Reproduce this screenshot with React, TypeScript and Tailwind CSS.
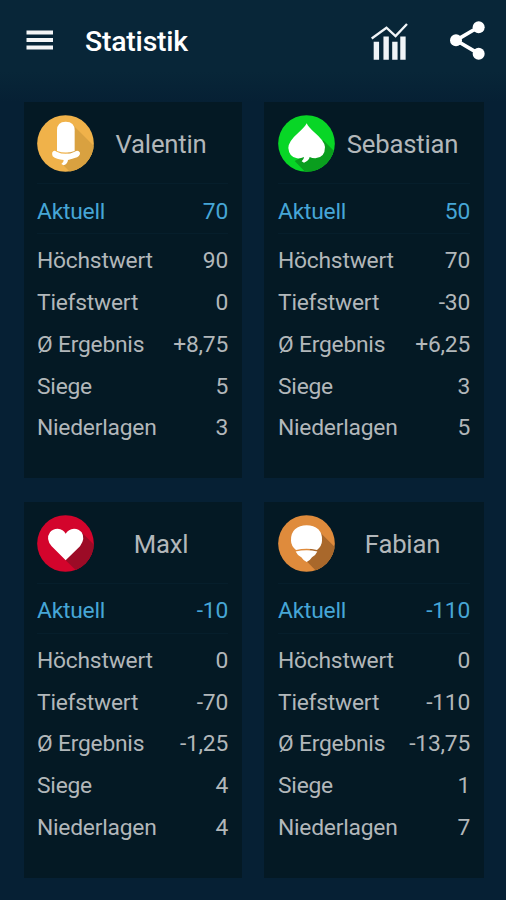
import type { ReactNode } from 'react';

type Suit = 'acorn' | 'spade' | 'heart' | 'bell';

interface Player {
  name: string;
  suit: Suit;
  current: string;
  stats: [string, string][];
}

const players: Player[] = [
  {
    name: 'Valentin',
    suit: 'acorn',
    current: '70',
    stats: [['Höchstwert', '90'], ['Tiefstwert', '0'], ['Ø Ergebnis', '+8,75'], ['Siege', '5'], ['Niederlagen', '3']],
  },
  {
    name: 'Sebastian',
    suit: 'spade',
    current: '50',
    stats: [['Höchstwert', '70'], ['Tiefstwert', '-30'], ['Ø Ergebnis', '+6,25'], ['Siege', '3'], ['Niederlagen', '5']],
  },
  {
    name: 'Maxl',
    suit: 'heart',
    current: '-10',
    stats: [['Höchstwert', '0'], ['Tiefstwert', '-70'], ['Ø Ergebnis', '-1,25'], ['Siege', '4'], ['Niederlagen', '4']],
  },
  {
    name: 'Fabian',
    suit: 'bell',
    current: '-110',
    stats: [['Höchstwert', '0'], ['Tiefstwert', '-110'], ['Ø Ergebnis', '-13,75'], ['Siege', '1'], ['Niederlagen', '7']],
  },
];

// Each badge is a disc, a long 45° shadow clipped to it, and the white suit shape
const suits: Record<Suit, { disc: string; shadow: string; shadowPath: string; shape: ReactNode }> = {
  acorn: {
    disc: '#f0b24a',
    shadow: '#d9a140',
    shadowPath: 'M104 26L190 112V190H118L76 148L100 100Z',
    shape: (
      <>
        <path d="M60 108V46Q60 20 86 20Q113 20 113 46V108Q86 117 60 108Z" />
        <path d="M46 112Q50 104 59 110Q86 123 113 110Q124 104 129 113Q130 124 113 129Q98 134 93 135Q92 147 80 151L73 147Q80 143 80 135Q58 134 47 124Q44 118 46 112Z" />
      </>
    ),
  },
  spade: {
    disc: '#08d626',
    shadow: '#0a9e1e',
    shadowPath: 'M136 76L190 130V190H100L50 138L100 110Z',
    shape: (
      <path d="M86 25Q91 36 108 51Q140 78 141 96Q141 128 112 130Q102 130 95 126Q93 137 78 143L71 139Q78 133 78 126Q68 131 57 130Q33 126 31 99Q31 79 61 53Q81 36 86 25Z" />
    ),
  },
  heart: {
    disc: '#d3042c',
    shadow: '#9c0b26',
    shadowPath: 'M132 50L190 108V190H142L86 136L110 90Z',
    shape: (
      <path d="M86 136L44 94Q25 72 39 52Q47 41 62 41Q79 42 86 56Q94 42 111 41Q126 42 134 52Q146 71 129 94Z" />
    ),
  },
  bell: {
    disc: '#df8b3c',
    shadow: '#a9682b',
    shadowPath: 'M120 46L190 116V190H136L86 139L100 90Z',
    shape: (
      <>
        <path d="M54 105Q39 92 39 77Q38 55 51 43Q65 31 86 31Q107 31 121 43Q134 57 132 77Q132 92 117 105Q86 98 54 105Z" />
        <path d="M53 109.500Q86 102 118 109.500Q113 121 102 127Q95 138 86 141Q77 138 70 127Q58 121 53 109.500Z" />
      </>
    ),
  },
};

function SuitBadge({ suit }: { suit: Suit }) {
  const { disc, shadow, shadowPath, shape } = suits[suit];
  return (
    <svg viewBox="0 0 171 171" className="w-[57px] h-[57px] shrink-0">
      <clipPath id={`disc-${suit}`}>
        <circle cx="85.5" cy="85.5" r="85" />
      </clipPath>
      <circle cx="85.5" cy="85.5" r="85" fill={disc} />
      <path d={shadowPath} fill={shadow} clipPath={`url(#disc-${suit})`} />
      <g fill="#fff">{shape}</g>
    </svg>
  );
}

function PlayerCard({ player }: { player: Player }) {
  return (
    <section className="h-[376px] bg-[#041924] pt-[13px] px-3.5 odd:pl-[13px] text-[22.8px] leading-none tracking-[-0.22px] text-[#b2b7ba]">
      <div className="flex items-center">
        <SuitBadge suit={player.suit} />
        <h2 className="flex-1 text-center text-[25.7px] pt-[3px]">{player.name}</h2>
      </div>

      <div className="mt-[11px] h-[51px] pt-[7px] flex items-center justify-between border-y border-[#061e2b] text-[#46a6d6]">
        <span>Aktuell</span>
        <span>{player.current}</span>
      </div>

      <div className="mt-[7px]">
        {player.stats.map(([label, value]) => (
          <div key={label} className="h-[41.75px] flex items-center justify-between">
            <span>{label}</span>
            <span>{value}</span>
          </div>
        ))}
      </div>
    </section>
  );
}

export default function App() {
  return (
    <div className="h-[900px] overflow-hidden bg-[#062034] font-['Roboto',sans-serif]">
      <header className="h-[102px] pb-[22px] pl-[26px] pr-[21px] flex items-center bg-linear-to-b from-[#082638] from-70% to-[#062034]">
        <button aria-label="Menü">
          <svg viewBox="0 0 27 20" className="w-[27px] h-5" fill="#f4f6f7">
            <path d="M0.5 0.5h26.5v4H0.5zM0.5 8h26.5v4H0.5zM0.5 15.5h26.5v4H0.5z" />
          </svg>
        </button>
        <h1 className="ml-8 pt-[5px] text-[28.4px] leading-none tracking-[-0.2px] font-medium text-white">Statistik</h1>

        <button aria-label="Diagramm" className="ml-auto pt-0.5">
          <svg viewBox="0 0 110 110" className="w-[37px] h-[37px]" fill="#f0f4f7">
            <path d="M8 56h16v53H8zM37 40h16v69H37zM63 56h16v53H63zM87 40h16v69H87z" />
            <path d="M2 46L46 14L73 39L107 3" fill="none" stroke="#f0f4f7" strokeWidth="7" />
          </svg>
        </button>
        <button aria-label="Teilen" className="ml-[42px]">
          <svg viewBox="0 0 105 117" className="w-[35px] h-[39px]" fill="#fff">
            <path d="M86 18L18 58L86 98" fill="none" stroke="#fff" strokeWidth="11" />
            <circle cx="86" cy="19" r="18" />
            <circle cx="18" cy="58" r="18" />
            <circle cx="86" cy="98" r="18" />
          </svg>
        </button>
      </header>

      <main className="grid grid-cols-[218px_220px] gap-x-[22px] gap-y-[23.5px] pl-6">
        {players.map(player => (
          <PlayerCard key={player.name} player={player} />
        ))}
      </main>
    </div>
  );
}
